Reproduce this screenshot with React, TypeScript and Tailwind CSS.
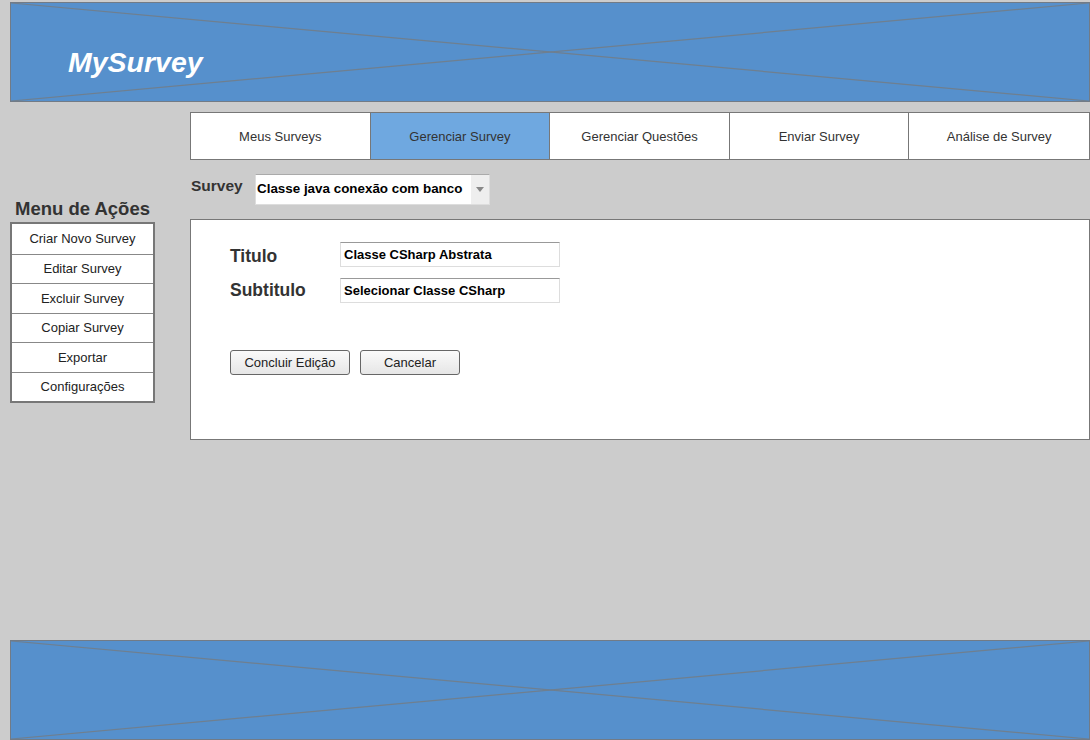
import React from "react";

const Cross = () => (
  <svg className="absolute inset-0 h-full w-full" viewBox="0 0 1080 100" preserveAspectRatio="none">
    <line x1="0" y1="0" x2="1080" y2="100" stroke="#6f7f8f" strokeWidth="1.2" vectorEffect="non-scaling-stroke" />
    <line x1="0" y1="100" x2="1080" y2="0" stroke="#6f7f8f" strokeWidth="1.2" vectorEffect="non-scaling-stroke" />
  </svg>
);

const tabs = ["Meus Surveys", "Gerenciar Survey", "Gerenciar Questões", "Enviar Survey", "Análise de Survey"];
const menu = ["Criar Novo Survey", "Editar Survey", "Excluir Survey", "Copiar Survey", "Exportar", "Configurações"];

export default function App() {
  return (
    <div className="h-[740px] w-[1090px] overflow-hidden bg-[#cccccc] pt-[2px] font-['Liberation_Sans',Arial,sans-serif]">
      <header className="relative ml-[10px] h-[100px] w-[1080px] border border-[#727b86] bg-[#5690cc]">
        <Cross />
        <div className="relative pl-[57px] pt-[43px] text-[28.5px] font-bold italic leading-[32px] text-white">MySurvey</div>
      </header>

      <main className="flex h-[538px]">
        <aside className="ml-[10px] w-[145px] pt-[96px]">
          <div className="text-center text-[18.5px] font-bold leading-[21px] text-[#333]">Menu de Ações</div>
          <ul className="mt-[3px] border-2 border-[#777] bg-white">
            {menu.map((m, i) => (
              <li
                key={m}
                className={`flex h-[29.5px] items-center justify-center text-[13px] text-[#222] ${i > 0 ? "border-t border-[#888]" : ""}`}
              >
                {m}
              </li>
            ))}
          </ul>
        </aside>

        <section className="ml-[35px] w-[900px] pt-[10px]">
          <nav className="grid h-[48px] grid-cols-5 divide-x divide-[#777] border border-[#777] bg-white">
            {tabs.map((t, i) => (
              <div
                key={t}
                className={`flex items-center justify-center pt-[2px] text-[13px] text-[#333] ${i === 1 ? "bg-[#6fa8e0]" : ""}`}
              >
                {t}
              </div>
            ))}
          </nav>

          <div className="mt-[14px] flex items-start">
            <span className="ml-[1px] mt-[3px] w-[64px] text-[15.5px] font-bold leading-[18px] text-[#333]">Survey</span>
            <div className="flex h-[31px] w-[235px] border border-[#ddd] border-t-[#aaa] bg-white">
              <span className="flex flex-1 items-center pl-[1px] text-[13.4px] font-bold text-black">
                Classe java conexão com banco
              </span>
              <span className="flex w-[18px] items-center justify-center bg-[#eeeeee]">
                <svg width="8" height="5" viewBox="0 0 8 5">
                  <path d="M0 0 L8 0 L4 5 Z" fill="#888" />
                </svg>
              </span>
            </div>
          </div>

          <div className="mt-[14px] h-[221px] border border-[#777] bg-white pl-[39px] pt-[22px]">
            <div className="flex items-center">
              <span className="mt-[3px] w-[110px] text-[17.5px] font-bold leading-[20px] text-[#333]">Titulo</span>
              <div className="flex h-[25px] w-[220px] items-center border border-[#ddd] border-t-[#999] pl-[3px] text-[13px] font-bold text-black">
                Classe CSharp Abstrata
              </div>
            </div>
            <div className="mt-[11px] flex items-center">
              <span className="-mt-[1px] w-[110px] text-[17.5px] font-bold leading-[20px] text-[#333]">Subtitulo</span>
              <div className="flex h-[25px] w-[220px] items-center border border-[#ddd] border-t-[#999] pl-[3px] text-[13px] font-bold text-black">
                Selecionar Classe CSharp
              </div>
            </div>
            <div className="mt-[47px] flex gap-[10px]">
              <button className="h-[25px] w-[120px] rounded-[3px] border border-[#666] bg-gradient-to-b from-[#fafafa] to-[#e6e6e6] pt-[1px] text-[13px] text-[#222]">
                Concluir Edição
              </button>
              <button className="h-[25px] w-[100px] rounded-[3px] border border-[#666] bg-gradient-to-b from-[#fafafa] to-[#e6e6e6] pt-[1px] text-[13px] text-[#222]">
                Cancelar
              </button>
            </div>
          </div>
        </section>
      </main>

      <footer className="relative ml-[10px] h-[100px] w-[1080px] border border-[#727b86] bg-[#5690cc]">
        <Cross />
      </footer>
    </div>
  );
}
